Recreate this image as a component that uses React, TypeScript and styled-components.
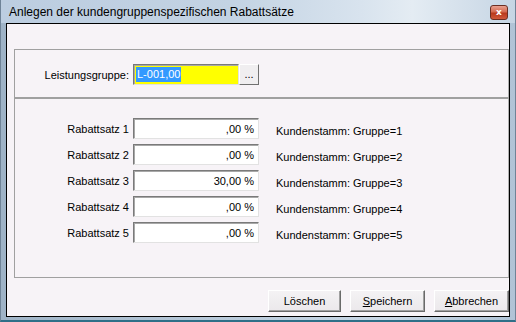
import { Fragment } from "react";
import styled, { createGlobalStyle } from "styled-components";

const GlobalStyle = createGlobalStyle`
  html, body {
    margin: 0;
    padding: 0;
    background: #ffffff;
  }
  body {
    font-family: "Liberation Sans", Arial, sans-serif;
    font-size: 11px;
    color: #000000;
  }
`;

const Window = styled.div`
  width: 516px;
  height: 322px;
  box-sizing: border-box;
  display: flex;
  flex-direction: column;
  background: linear-gradient(to right, #9fb3c7 0%, #b7c8d9 40%, #c9d7e5 75%, #b0c3d6 100%);
  border-left: 1px solid #6f8397;
  border-right: 1px solid #6f8397;
  border-bottom: 2px solid #2f6f88;
  padding: 0 5px 3px 5px;
`;

const TitleBar = styled.div`
  height: 23px;
  display: flex;
  align-items: center;
  justify-content: space-between;
  margin: 0 -5px;
  padding-left: 8px;
  padding-right: 7px;
  background: linear-gradient(
    to right,
    #bccde0 0%,
    #c3d3e3 45%,
    #d8e3ee 70%,
    #e4ecf3 80%,
    #c6d5e4 100%
  );
`;

const Title = styled.span`
  font-size: 12px;
  color: #000000;
  white-space: nowrap;
`;

const CloseButton = styled.div`
  width: 16px;
  height: 13px;
  margin-top: 2px;
  border: 1px solid #6b2e22;
  border-radius: 3px;
  background: linear-gradient(to bottom, #e9a08f 0%, #d46a50 45%, #b8391c 55%, #d0583a 100%);
  display: flex;
  align-items: center;
  justify-content: center;
  color: #ffffff;
  font-family: "DejaVu Sans", sans-serif;
  font-size: 9px;
  font-weight: bold;
  line-height: 1;
`;

const Client = styled.div`
  flex: 1;
  border: 1px solid #000000;
  background: #f7f3f7;
  display: flex;
  flex-direction: column;
`;

const Group = styled.div<{ $top: number; $height: number }>`
  margin: ${(p) => p.$top}px 0 0 7px;
  height: ${(p) => p.$height}px;
  box-sizing: border-box;
  border: 1px solid #a0a0a0;
  border-right-color: #b0b0b0;
`;

const LookupRow = styled.div`
  display: flex;
  align-items: center;
  margin-top: 14px;
`;

const FieldLabel = styled.span`
  width: 114px;
  text-align: right;
  white-space: nowrap;
  margin-right: 4px;
`;

const LookupInput = styled.div`
  width: 106px;
  height: 21px;
  box-sizing: border-box;
  border: 1px solid;
  border-color: #7a7a7a #e2e2e2 #e2e2e2 #7a7a7a;
  box-shadow: inset 1px 1px 0 #a8a8a8;
  background: #ffff00;
  display: flex;
  align-items: center;
  padding-left: 2px;
`;

const Selection = styled.span`
  background: #3399ff;
  color: #ffffff;
  padding: 1px 1px;
  line-height: 13px;
`;

const DotsButton = styled.div`
  width: 20px;
  height: 21px;
  box-sizing: border-box;
  border: 1px solid;
  border-color: #ffffff #707070 #707070 #ffffff;
  background: #f0eef0;
  display: flex;
  align-items: flex-end;
  justify-content: center;
  padding-bottom: 4px;
  line-height: 1;
`;

const RateGrid = styled.div`
  display: grid;
  grid-template-columns: 114px 126px auto;
  column-gap: 4px;
  grid-auto-rows: 21px;
  row-gap: 5px;
  margin-top: 19px;
  align-items: center;
`;

const RateLabel = styled.span`
  text-align: right;
  white-space: nowrap;
`;

const RateInput = styled.div`
  height: 21px;
  box-sizing: border-box;
  border: 1px solid;
  border-color: #7a7a7a #e2e2e2 #e2e2e2 #7a7a7a;
  box-shadow: inset 1px 1px 0 #a8a8a8;
  background: #ffffff;
  display: flex;
  align-items: center;
  justify-content: flex-end;
  padding-right: 4px;
`;

const RateHint = styled.span`
  padding-left: 13px;
  padding-top: 5px;
  white-space: nowrap;
`;

const ButtonBar = styled.div`
  display: flex;
  justify-content: flex-end;
  gap: 9px;
  margin-top: 12px;
`;

const DialogButton = styled.button<{ $width: number }>`
  width: ${(p) => p.$width}px;
  height: 22px;
  box-sizing: border-box;
  border: 1px solid;
  border-color: #ffffff #6a6a6a #6a6a6a #ffffff;
  box-shadow: inset -1px -1px 0 #a0a0a0;
  background: linear-gradient(to bottom, #f4f2f4 0%, #ebe8eb 100%);
  font-family: "Liberation Sans", Arial, sans-serif;
  font-size: 11px;
  color: #000000;
  padding: 0;
`;

const rates = [
  { label: "Rabattsatz 1", value: ",00 %", group: 1 },
  { label: "Rabattsatz 2", value: ",00 %", group: 2 },
  { label: "Rabattsatz 3", value: "30,00 %", group: 3 },
  { label: "Rabattsatz 4", value: ",00 %", group: 4 },
  { label: "Rabattsatz 5", value: ",00 %", group: 5 },
];

function App() {
  return (
    <>
      <GlobalStyle />
      <Window>
        <TitleBar>
          <Title>Anlegen der kundengruppenspezifischen Rabattsätze</Title>
          <CloseButton>x</CloseButton>
        </TitleBar>
        <Client>
          <Group $top={25} $height={49}>
            <LookupRow>
              <FieldLabel>Leistungsgruppe:</FieldLabel>
              <LookupInput>
                <Selection>L-001,00</Selection>
              </LookupInput>
              <DotsButton>...</DotsButton>
            </LookupRow>
          </Group>
          <Group $top={0} $height={180}>
            <RateGrid>
              {rates.map((r) => (
                <Fragment key={r.label}>
                  <RateLabel>{r.label}</RateLabel>
                  <RateInput>{r.value}</RateInput>
                  <RateHint>Kundenstamm: Gruppe={r.group}</RateHint>
                </Fragment>
              ))}
            </RateGrid>
          </Group>
          <ButtonBar>
            <DialogButton $width={73}>Löschen</DialogButton>
            <DialogButton $width={75}>
              <u>S</u>peichern
            </DialogButton>
            <DialogButton $width={75}>
              <u>A</u>bbrechen
            </DialogButton>
          </ButtonBar>
        </Client>
      </Window>
    </>
  );
}

export default App;
